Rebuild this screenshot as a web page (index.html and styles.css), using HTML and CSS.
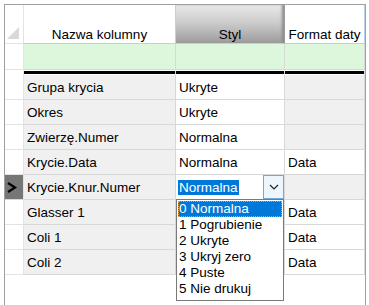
FILE: index.html
```html
<!DOCTYPE html>
<html>
	<head>
		<meta charset="UTF-8">
		<title>Kolumny</title>
		<link rel="stylesheet" href="styles.css">
	</head>
	<body>
		<div class="frame">
			<div class="table">
				<!-- naglowek -->
				<div class="c hd corner">
					<svg width="18" height="38" viewBox="0 0 18 38"><polygon points="2,34 14,34 14,22" fill="#d9d9d9"/></svg>
				</div>
				<div class="c hd">Nazwa kolumny</div>
				<div class="c hd sorted">Styl</div>
				<div class="c hd">Format daty</div>

				<!-- wiersz filtra -->
				<div class="c rh"></div>
				<div class="c green"></div>
				<div class="c green"></div>
				<div class="c green"></div>

				<!-- separator -->
				<div class="c dv first"></div>
				<div class="c dv"></div>
				<div class="c dv"></div>
				<div class="c dv"></div>

				<div class="c rh"></div>
				<div class="c ro">Grupa krycia</div>
				<div class="c">Ukryte</div>
				<div class="c ro"></div>

				<div class="c rh"></div>
				<div class="c ro">Okres</div>
				<div class="c">Ukryte</div>
				<div class="c ro"></div>

				<div class="c rh"></div>
				<div class="c ro">Zwierzę.Numer</div>
				<div class="c">Normalna</div>
				<div class="c ro"></div>

				<div class="c rh"></div>
				<div class="c ro">Krycie.Data</div>
				<div class="c">Normalna</div>
				<div class="c">Data</div>

				<div class="c rh current">
					<svg width="18" height="24" viewBox="0 0 18 24"><polyline points="3,8 10,12.5 3,17" fill="none" stroke="#000" stroke-width="2.2"/></svg>
				</div>
				<div class="c ro">Krycie.Knur.Numer</div>
				<div class="c edit">
					<span class="sel">Normalna</span>
					<span class="btn">
						<svg width="10" height="6" viewBox="0 0 10 6"><polyline points="1,1 5,5 9,1" fill="none" stroke="#222" stroke-width="1.2"/></svg>
					</span>
				</div>
				<div class="c ro"></div>

				<div class="c rh"></div>
				<div class="c ro">Glasser 1</div>
				<div class="c"></div>
				<div class="c">Data</div>

				<div class="c rh"></div>
				<div class="c ro">Coli 1</div>
				<div class="c"></div>
				<div class="c">Data</div>

				<div class="c rh"></div>
				<div class="c ro">Coli 2</div>
				<div class="c"></div>
				<div class="c">Data</div>
			</div>

			<!-- lista rozwijana -->
			<ul class="drop">
				<li class="on">0 Normalna</li>
				<li>1 Pogrubienie</li>
				<li>2 Ukryte</li>
				<li>3 Ukryj zero</li>
				<li>4 Puste</li>
				<li>5 Nie drukuj</li>
			</ul>
		</div>
	</body>
</html>
```

FILE: styles.css
```css
*{
	margin: 0px;
	padding: 0px;
	box-sizing: border-box;
}

ul{
	list-style: none;
}

body{
	background: #ffffff;
	font-family: "Liberation Sans", Arial, sans-serif;
	font-size: 13.5px;
	color: #000000;
	overflow: hidden;
}

.frame{ /*ramka siatki*/
	position: relative;
	margin: 4px 0 0 4px;
	width: 362px;
	height: 310px;
	border: 1px solid #a0a0a0;
	background: #ffffff;
}

.table{
	display: grid;
	grid-template-columns: 19px 152px 109px 80px;
	grid-template-rows: 39px 26px 5px repeat(8, 25px);
}

.c{
	border-right: 1px solid #d8d8d8;
	border-bottom: 1px solid #d8d8d8;
	padding-left: 3px;
	line-height: 26px;
	white-space: nowrap;
	overflow: hidden;
	background: #ffffff;
}

/*naglowek*/
.hd{
	border-right-color: #b9d1ea;
	border-bottom-color: #b9d1ea;
	display: flex;
	align-items: flex-end;
	justify-content: center;
	line-height: 15px;
	padding: 0 0 1px 0;
}

.hd.corner{
	border-right-color: #e3e3e3;
	border-bottom-color: #e3e3e3;
	padding: 0;
}

.hd.sorted{
	background: linear-gradient(#e8e8e8, #cdcdcd 45%, #9c9c9c);
	box-shadow: inset -3px 0 3px -1px #8c8c8c;
	border-right-color: #9a9a9a;
}

.rh{
	padding: 0;
	border-right-color: #e3e3e3;
	border-bottom-color: #e3e3e3;
}

.rh.current{
	background: #767676;
	border-bottom-color: #d8d8d8;
}

.rh svg, .hd.corner svg{
	display: block;
}

.green{
	background: #dcf7dc;
}

/*gruba linia pod wierszem filtra*/
.dv{
	border-top: 1px solid #ffffff;
	border-bottom: 1px solid #ffffff;
	background: #000000;
	background-clip: padding-box;
}

.dv.first{
	background: #ffffff;
	border-right-color: #e3e3e3;
}

.ro{
	background: #f0f0f0;
}

/*komorka w edycji*/
.edit{
	display: flex;
	align-items: center;
	padding-left: 2px;
}

.edit .sel{
	background: #0078d7;
	color: #ffffff;
	line-height: 15px;
	padding: 0 1px;
}

.edit .btn{
	margin-left: auto;
	width: 21px;
	height: 24px;
	border: 1px solid #6aa9e4;
	background: #eef6fd;
	display: flex;
	align-items: center;
	justify-content: center;
}

.drop{
	position: absolute;
	left: 171px;
	top: 194px;
	width: 108px;
	height: 102px;
	border: 1px solid #7a7a7a;
	background: #ffffff;
	padding: 1px 0 0 1px;
}

.drop li{
	height: 16px;
	line-height: 16px;
	padding-left: 1px;
	white-space: nowrap;
}

.drop li.on{
	background: #0078d7;
	color: #ffffff;
	outline: 1px dotted #e8a040;
	outline-offset: -1px;
	margin-right: 1px;
}
```
